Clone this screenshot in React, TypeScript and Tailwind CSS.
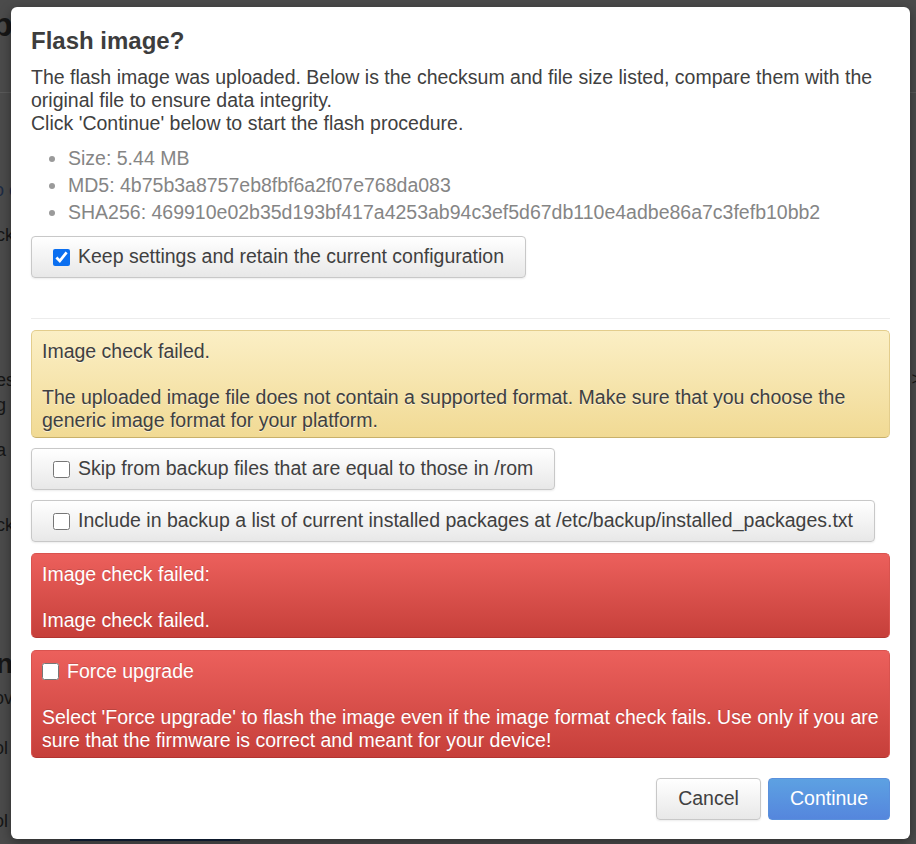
import React from 'react';

const font = { fontFamily: '"Liberation Sans", Arial, sans-serif' };

// Gray bootstrap-ish button wrapping a checkbox
const CheckButton: React.FC<{ label: string; checked?: boolean }> = ({ label, checked }) => (
  <label className="inline-flex h-[42px] items-center gap-[8px] self-start rounded-[4px] border border-[#c8c8c8] bg-gradient-to-b from-white to-[#e8e8e8] pl-[21px] pr-[21px] text-[19.5px] text-[#404040] shadow-[0_1px_2px_rgba(0,0,0,0.08)]">
    <input
      type="checkbox"
      defaultChecked={checked}
      className="m-0 h-[17px] w-[17px] accent-[#0b6ff0]"
    />
    <span>{label}</span>
  </label>
);

const App: React.FC = () => {
  return (
    <div className="relative h-[844px] w-full overflow-hidden bg-[#4b4b4b]" style={font}>
      {/* dimmed page behind the dialog */}
      <div className="flex flex-col text-[#161616] text-[18px] whitespace-nowrap">
        <div className="mt-[4px] h-[40px] -ml-[8px] text-[34px] font-bold leading-[40px]">p</div>
        <div className="mt-[48px] h-px w-full bg-[#5a5a5a]" />
        <div className="mt-[86px] -ml-[6px] h-[23px] leading-[23px] text-[#1d2a44]">o c</div>
        <div className="mt-[22px] -ml-[4px] h-[23px] leading-[23px]">ck</div>
        <div className="mt-[122px] -ml-[4px] h-[23px] leading-[23px]">es</div>
        <div className="mt-[2px] -ml-[4px] h-[23px] leading-[23px]">g</div>
        <div className="mt-[22px] -ml-[4px] h-[23px] leading-[23px]">a</div>
        <div className="mt-[52px] -ml-[4px] h-[23px] leading-[23px]">ck</div>
        <div className="mt-[112px] -ml-[4px] h-[30px] text-[28px] font-bold leading-[30px]">n</div>
        <div className="mt-[8px] -ml-[6px] h-[23px] leading-[23px]">ov</div>
        <div className="mt-[27px] -ml-[6px] h-[23px] leading-[23px]">ol</div>
        <div className="mt-[50px] -ml-[6px] h-[23px] leading-[23px]">ol</div>
        <div className="ml-[70px] mt-[-2px] h-[10px] w-[170px] rounded-t-[4px] bg-[#13233d]" />
      </div>
      <div className="absolute right-0 top-[92px] h-px w-[8px] bg-[#5a5a5a]" />
      <div className="absolute right-[-6px] top-[366px] text-[18px] text-[#161616]">&gt;</div>

      {/* dialog */}
      <div className="absolute left-[11px] top-[7px] flex h-[832px] w-[899px] flex-col rounded-[6px] bg-white px-[20px] pt-[21px] text-[#404040] shadow-[0_3px_12px_rgba(0,0,0,0.4)]">
        <h3 className="text-[24px] font-bold leading-[26px] text-[#3d3d3d]">Flash image?</h3>

        <p className="mt-[12px] text-[19.5px] leading-[23px]">
          The flash image was uploaded. Below is the checksum and file size listed, compare them with the original file to ensure data integrity.
          <br />
          Click 'Continue' below to start the flash procedure.
        </p>

        <ul className="mt-[10px] list-disc pl-[37px] text-[19.5px] leading-[27px] text-[#858585] marker:text-[#9a9a9a]">
          <li>Size: 5.44 MB</li>
          <li>MD5: 4b75b3a8757eb8fbf6a2f07e768da083</li>
          <li>SHA256: 469910e02b35d193bf417a4253ab94c3ef5d67db110e4adbe86a7c3fefb10bb2</li>
        </ul>

        <div className="mt-[10px] flex">
          <CheckButton label="Keep settings and retain the current configuration" checked />
        </div>

        <div className="mt-[40px] h-px w-full bg-[#ececec]" />

        <div className="mt-[11px] rounded-[5px] border border-[#e3cd8c] border-b-[#c8b06a] bg-gradient-to-b from-[#fbefc5] to-[#f1da94] pl-[10px] pr-[10px] pt-[9px] pb-[5px] text-[19.5px] leading-[23px] text-[#404040] [text-shadow:0_1px_0_rgba(255,255,255,0.6)]">
          <p>Image check failed.</p>
          <p className="mt-[23px]">
            The uploaded image file does not contain a supported format. Make sure that you choose the generic image format for your platform.
          </p>
        </div>

        <div className="mt-[10px] flex">
          <CheckButton label="Skip from backup files that are equal to those in /rom" />
        </div>
        <div className="mt-[10px] flex">
          <CheckButton label="Include in backup a list of current installed packages at /etc/backup/installed_packages.txt" />
        </div>

        <div className="mt-[11px] rounded-[5px] border border-[#d9534f] border-b-[#b23430] bg-gradient-to-b from-[#ec605c] to-[#c63f3a] pl-[10px] pr-[10px] pt-[9px] pb-[5px] text-[19.5px] leading-[23px] text-white [text-shadow:0_-1px_0_rgba(0,0,0,0.15)]">
          <p>Image check failed:</p>
          <p className="mt-[23px]">Image check failed.</p>
        </div>

        <div className="mt-[12px] rounded-[5px] border border-[#d9534f] border-b-[#b23430] bg-gradient-to-b from-[#ec605c] to-[#c63f3a] pl-[10px] pr-[10px] pt-[9px] pb-[5px] text-[19.5px] leading-[23px] text-white [text-shadow:0_-1px_0_rgba(0,0,0,0.15)]">
          <label className="flex items-center gap-[8px]">
            <input type="checkbox" className="m-0 h-[17px] w-[17px] accent-[#0b6ff0]" />
            <span>Force upgrade</span>
          </label>
          <p className="mt-[23px]">
            Select 'Force upgrade' to flash the image even if the image format check fails. Use only if you are sure that the firmware is correct and meant for your device!
          </p>
        </div>

        <div className="mt-[20px] flex justify-end gap-[7px]">
          <button className="h-[42px] w-[105px] rounded-[4px] border border-[#c8c8c8] bg-gradient-to-b from-white to-[#e8e8e8] text-[19.5px] text-[#404040] shadow-[0_1px_2px_rgba(0,0,0,0.08)]">
            Cancel
          </button>
          <button className="h-[42px] w-[122px] rounded-[4px] border border-[#5a90dc] bg-gradient-to-b from-[#5da1e2] to-[#5586dd] text-[19.5px] text-white">
            Continue
          </button>
        </div>
      </div>
    </div>
  );
};

export default App;
